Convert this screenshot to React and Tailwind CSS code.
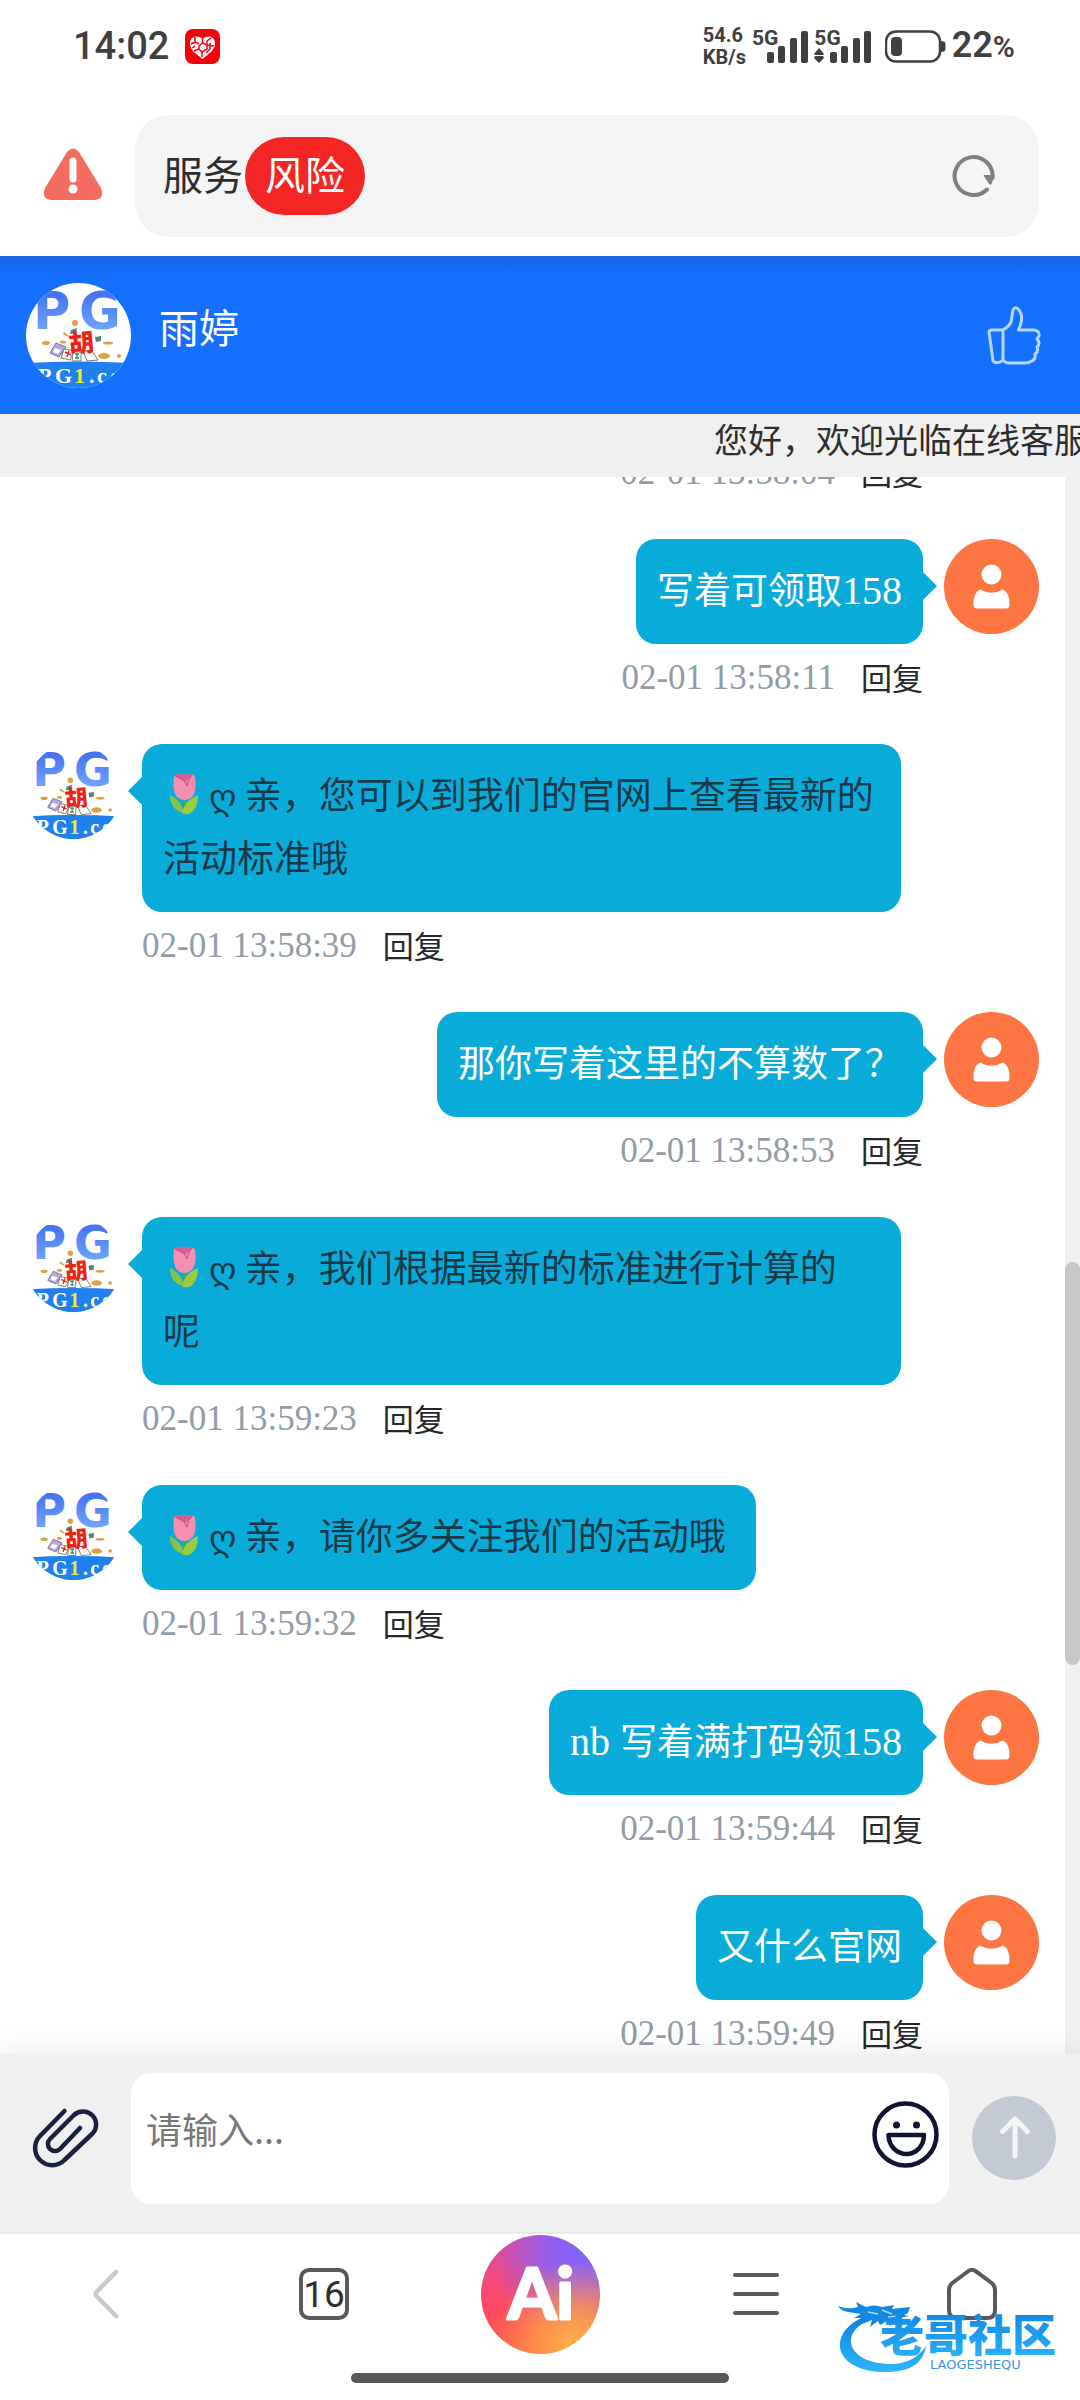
import { useId } from "react";

const CJK = "font-['Noto_Sans_CJK_SC',sans-serif]";

const messages = [
  { from: "me", text: "写着可领取", digits: "158", time: "02-01 13:58:11" },
  { from: "agent", lines: ["亲，您可以到我们的官网上查看最新的", "活动标准哦"], time: "02-01 13:58:39" },
  { from: "me", text: "那你写着这里的不算数了？", time: "02-01 13:58:53" },
  { from: "agent", lines: ["亲，我们根据最新的标准进行计算的", "呢"], time: "02-01 13:59:23" },
  { from: "agent", lines: ["亲，请你多关注我们的活动哦"], time: "02-01 13:59:32" },
  { from: "me", prefix: "nb ", text: "写着满打码领", digits: "158", time: "02-01 13:59:44" },
  { from: "me", text: "又什么官网", time: "02-01 13:59:49" },
];

function SignalBars({ arrows }) {
  return (
    <div className="flex h-9 items-end">
      <span className="-mr-3 self-start text-[21px] leading-5 font-bold">5G</span>
      <svg width="42" height="34" viewBox="0 0 42 34" fill="currentColor" aria-hidden="true">
        <rect x="1" y="22" width="7" height="11" rx="2" />
        <rect x="12" y="16" width="7" height="17" rx="2" />
        <rect x="24" y="8" width="7" height="25" rx="2" />
        <rect x="35" y="1" width="7" height="32" rx="2" />
      </svg>
      {arrows && (
        <svg className="order-first -mr-2.5" width="10" height="16" viewBox="0 0 10 16" fill="currentColor" aria-hidden="true">
          <path d="M5 0 10 6 9 7H1L0 6ZM5 15 10 10 9 8H1L0 10Z" />
        </svg>
      )}
    </div>
  );
}

function StatusBar() {
  return (
    <div className="flex h-[115px] items-start justify-between pt-6 pr-[65px] pl-[73px] font-[Roboto,sans-serif] text-[#404040]">
      <div className="flex h-11 items-center gap-4">
        <span className="text-[38px] leading-11 font-medium">14:02</span>
        <svg width="35" height="35" viewBox="0 0 35 35" aria-label="通知">
          <rect width="35" height="35" rx="8" fill="#f5000c" />
          <path d="M17.500 30C12 25 5 22 5 14C5 8 12 5 17.500 10C23 5 30 8 30 14C30 22 23 25 17.500 30Z" fill="#fff" />
          <path
            d="M10 8V13L6 15M10 13 14 15M17.500 10V14L14 17V20L9 22M17.500 14 22 16V12L26 9M22 16 29 17M14 20 17 23 22 20V17M17 23V28M10 17 7 19M25 14V20L21 24"
            stroke="#f5000c"
            strokeWidth="1.500"
            fill="none"
          />
        </svg>
      </div>
      <div className="flex h-11 items-center gap-1.5">
        <div className="text-[20px] leading-[22px] font-bold">
          <div>54.6</div>
          <div>KB/s</div>
        </div>
        <SignalBars />
        <SignalBars arrows />
        <svg className="ml-2" width="61" height="33" viewBox="0 0 61 33" fill="none" aria-label="电量">
          <rect x="1" y="1.500" width="54" height="30" rx="10" stroke="currentColor" strokeWidth="2.500" />
          <rect x="6" y="7" width="11" height="19" rx="4" fill="currentColor" />
          <path d="M56 11Q60.500 11 60.500 14V19Q60.500 22 56 22Z" fill="currentColor" />
        </svg>
        <span className="text-[36px] leading-11 font-semibold">
          22<span className="text-[30px]">%</span>
        </span>
      </div>
    </div>
  );
}

function AddressBar() {
  return (
    <div className="flex items-center pr-[41px] pb-[19px]">
      <div className="flex w-[135px] shrink-0 justify-center">
        <svg className="mb-1 ml-2.5" width="60" height="52" viewBox="0 0 60 52" aria-label="警告">
          <path d="M24 4Q30-3 36 4L58 40Q62 51 52 52H8Q-2 51 2 40Z" fill="#f56c61" />
          <path d="M30 13V31" stroke="#fff" strokeWidth="7" strokeLinecap="round" />
          <circle cx="30" cy="41" r="4.500" fill="#fff" />
        </svg>
      </div>
      <div className="flex h-[122px] flex-1 items-center rounded-[34px] bg-[#f4f4f4] pr-[43px] pl-7 text-[40px] text-[#2e2e2e]">
        <span className="pb-1.5">服务</span>
        <span className="ml-0.5 flex h-[78px] items-center rounded-full bg-[#f42525] px-5 pb-1.5 text-white">风险</span>
        <button className="mb-0.5 ml-auto" aria-label="刷新">
          <svg width="44" height="44" viewBox="0 0 44 44" fill="none">
            <path d="M35 36.500A19 19 0 1 1 40.500 25" stroke="#808080" strokeWidth="4" strokeLinecap="round" />
            <path d="M32 22.500H42L39 31Q38 32 37 30Z" fill="#808080" stroke="#808080" strokeLinejoin="round" />
          </svg>
        </button>
      </div>
    </div>
  );
}

function BrandAvatar({ size }) {
  const id = useId();
  return (
    <svg className="shrink-0" width={size} height={size} viewBox="0 0 105 105" aria-label="客服头像">
      <defs>
        <clipPath id={id + "c"}>
          <circle cx="52.500" cy="52.500" r="52.500" />
        </clipPath>
        <linearGradient id={id + "g"} x1="0" y1="0" x2="0" y2="1">
          <stop offset="0.200" stopColor="#4572f2" />
          <stop offset="0.900" stopColor="#73adfb" />
        </linearGradient>
      </defs>
      <g clipPath={`url(#${id}c)`}>
        <rect width="105" height="105" fill="#fff" />
        <text x="7" y="46" fontFamily="DejaVu Sans, sans-serif" fontWeight="700" fontSize="51" fill={`url(#${id}g)`}>
          P
        </text>
        <text x="53" y="46" fontFamily="DejaVu Sans, sans-serif" fontWeight="700" fontSize="51" fill={`url(#${id}g)`}>
          G
        </text>
        <g fill="#e0a046">
          <circle cx="49" cy="40" r="3" />
          <ellipse cx="20" cy="60" rx="4" ry="2" />
          <ellipse cx="37" cy="59" rx="3" ry="1.500" />
          <ellipse cx="82" cy="60" rx="5" ry="1.500" />
          <circle cx="93" cy="73" r="2" />
          <ellipse cx="78" cy="73" rx="6" ry="3" />
          <path d="M38 49 43 53 42 54 37 51Z" />
        </g>
        <path d="M45 47 51 45 50 50 44 51ZM69 54 75 53 75 58 70 59Z" fill="#5b8276" />
        <g stroke="#777" strokeWidth="1">
          <path d="M30 60 40 64 33 74 24 70Z" fill="#b9a2ee" />
          <path d="M38 66 48 68 44 77 35 75Z" fill="#fff" />
          <path d="M47 69H55V78H46Z" fill="#fff" />
          <path d="M57 68 66 68 72 77 61 78Z" fill="#fff" />
        </g>
        <path d="M29 65 35 67 32 71 27 69Z" fill="#fff" />
        <path d="M39 69 45 72M43 68 41 74" stroke="#e02626" strokeWidth="1.500" />
        <path d="M49 71H53M51 70V76M49 75H53" stroke="#2a9d4b" strokeWidth="1.500" />
        <text
          x="43"
          y="69"
          transform="rotate(-5 54 60)"
          fontFamily="Noto Sans CJK SC, sans-serif"
          fontWeight="900"
          fontSize="25"
          fill="#ee2214"
        >
          胡
        </text>
        <path d="M0 80Q52 77 105 80V105H0Z" fill="#1f80ee" />
        <g fontFamily="Liberation Serif, serif" fontWeight="700" fontSize="22" fill="#fff">
          <text x="12" y="100">P</text>
          <text x="29" y="100">G</text>
          <text x="48" y="100" fill="#e6ee3c">1</text>
          <text x="63" y="100">.</text>
          <text x="71" y="100">c</text>
          <text x="84" y="100">o</text>
        </g>
      </g>
    </svg>
  );
}

function UserAvatar() {
  return (
    <svg className="shrink-0" width="95" height="95" viewBox="0 0 95 95" aria-label="用户头像">
      <circle cx="47.500" cy="47.500" r="47.500" fill="#fd7542" />
      <circle cx="47.500" cy="35.500" r="10" fill="#fff" />
      <path d="M36 50.500Q47.500 57 59 50.500Q66 54 65.500 66Q65.500 69.500 62 69.500H33Q29.500 69.500 29.500 66Q29 54 36 50.500Z" fill="#fff" />
    </svg>
  );
}

function Tulip() {
  return (
    <svg className="mr-2.5 ml-1.5 inline-block align-[-6px]" width="30" height="42" viewBox="0 0 30 42" aria-label="郁金香">
      <path d="M14 26H17V38H14Z" fill="#689f38" />
      <path d="M15 40Q13 28 1 22Q1 37 15 40Z" fill="#8bc34a" />
      <path d="M13 40Q15 28 29 22Q29 37 20 41Q15 42 13 40Z" fill="#9ccc3c" />
      <path d="M5 3Q10-1 13 2Q16-1 19 2Q24-1 26 4Q29 26 16 27Q2 27 5 3Z" fill="#f48fb1" />
      <path d="M5 3Q10-1 13 2Q16-1 19 2Q22 0 24 2L16 9Z" fill="#d85f94" />
      <path d="M8 3Q15 5 18 13Q19 6 23 2" fill="none" stroke="#c84b84" strokeWidth="1" />
    </svg>
  );
}

function Meta({ time, mine }) {
  return (
    <div className={"flex h-[100px] items-start gap-[26px] pt-2.5 " + (mine ? "justify-end" : "")}>
      <time className="font-['Liberation_Serif',serif] text-[35px] leading-[48px] text-[#929ca8]">{time}</time>
      <button className="text-[31px] leading-[46px] text-[#26282b]">回复</button>
    </div>
  );
}

function MyMessage({ prefix, text, digits, time }) {
  return (
    <li className="flex justify-end gap-[21px]">
      <div>
        <div className="flex justify-end">
          <div className="relative rounded-[20px] bg-[#09acd9] px-[21px] pt-[18px] pb-6 text-[37px] leading-[63px] text-white">
            {prefix && <span className="font-['Liberation_Serif',serif] text-[40px] leading-none whitespace-pre">{prefix}</span>}
            {text}
            {digits && <span className="font-['Liberation_Serif',serif] text-[40px] leading-none">{digits}</span>}
            <svg className="absolute top-[33px] left-full" width="14" height="28" viewBox="0 0 14 28" fill="#09acd9" aria-hidden="true">
              <path d="M0 0 14 14 0 28Z" />
            </svg>
          </div>
        </div>
        <Meta time={time} mine />
      </div>
      <UserAvatar />
    </li>
  );
}

function AgentMessage({ lines, time }) {
  return (
    <li className="flex gap-[21px]">
      <BrandAvatar size={95} />
      <div>
        <div className="relative w-fit max-w-[759px] rounded-[20px] bg-[#09acd9] pt-[18px] pr-[30px] pb-6 pl-[21px] text-[37px] leading-[63px] text-[#173a49]">
          <svg className="absolute top-[33px] right-full" width="14" height="28" viewBox="0 0 14 28" fill="#09acd9" aria-hidden="true">
            <path d="M14 0 0 14 14 28Z" />
          </svg>
          <p className={lines.length > 1 ? "w-[708px] whitespace-nowrap" : "whitespace-nowrap"}>
            <Tulip />
            <span className="font-['DejaVu_Sans',sans-serif] text-[35px] leading-none">ღ</span>
            <span> {lines[0]}</span>
            {lines[1] && <br />}
            {lines[1]}
          </p>
        </div>
        <Meta time={time} />
      </div>
    </li>
  );
}

function ChatLog() {
  return (
    <main className="flex min-h-0 flex-1 overflow-hidden">
      <ul className="-mt-[38px] flex-1 px-[26px]">
        <li className="pr-[116px]">
          <Meta time="02-01 13:58:04" mine />
        </li>
        {messages.map((m) => (m.from === "me" ? <MyMessage key={m.time} {...m} /> : <AgentMessage key={m.time} {...m} />))}
      </ul>
      <div className="w-[15px] bg-[#f0f0f0] pt-[785px]">
        <div className="h-[403px] rounded-full bg-[#c6c6c6]" />
      </div>
    </main>
  );
}

function Composer() {
  return (
    <form
      className="relative flex h-[178px] shrink-0 items-center bg-[#f0f0f0] pr-6 pl-[31px] shadow-[0_0_30px_rgba(0,0,0,0.1)]"
      onSubmit={(e) => e.preventDefault()}
    >
      <button type="button" aria-label="附件" className="mr-7 mb-2.5 shrink-0">
        <svg width="72" height="64" viewBox="0 0 72 64" fill="none" stroke="#1b2141" strokeWidth="4.500" strokeLinecap="round" strokeLinejoin="round">
          <path d="M33.500 5 9 30A17 17 0 0 0 33.500 54L61 28A13 13 0 0 0 43 9L19 33A7 7 0 0 0 29 43L49 22" />
        </svg>
      </button>
      <div className="mt-[19px] flex h-[131px] flex-1 items-center self-start rounded-[20px] bg-white pr-2.5 pl-[15px]">
        <textarea
          aria-label="请输入"
          placeholder="请输入..."
          className="h-full min-w-0 flex-1 resize-none bg-transparent pt-7 text-[36px] leading-[54px] outline-none placeholder:text-[#777]"
        />
        <button type="button" aria-label="表情" className="mb-2">
          <svg width="67" height="67" viewBox="0 0 67 67" fill="none" stroke="#0f1433" strokeWidth="4.500" strokeLinejoin="round">
            <circle cx="33.500" cy="33.500" r="31" />
            <path d="M16.500 34H52C52 45 44 53 34.500 53S16.500 45 16.500 34Z" />
            <circle cx="24.500" cy="24" r="3.500" fill="#0f1433" stroke="none" />
            <circle cx="44.500" cy="24" r="3.500" fill="#0f1433" stroke="none" />
          </svg>
        </button>
      </div>
      <button type="submit" aria-label="发送" className="mb-2.5 ml-[23px] shrink-0">
        <svg width="84" height="84" viewBox="0 0 84 84" fill="none">
          <circle cx="42" cy="42" r="42" fill="#c4cad3" />
          <path d="M43 60V24M30.500 35.500 43 23 55.500 35.500" stroke="#f3f4f5" strokeWidth="5" strokeLinecap="round" strokeLinejoin="round" />
        </svg>
      </button>
    </form>
  );
}

function Watermark() {
  return (
    <div className="pointer-events-none absolute right-3 bottom-6 h-[78px] w-[230px]" aria-label="老哥社区">
      <svg width="230" height="78" viewBox="0 0 230 78">
        <defs>
          <linearGradient id="wave" x1="0" y1="0" x2="0" y2="1">
            <stop offset="0" stopColor="#0c7fe0" />
            <stop offset="1" stopColor="#2db6fb" />
          </linearGradient>
        </defs>
        <path
          d="M38 15C16 20 1 33 2 49C4 66 25 75 52 74C72 73 85 66 88 48C80 61 66 66 53 66C31 66 13 57 13 43C13 31 26 22 46 17Z"
          fill="url(#wave)"
        />
        <path
          d="M0 8Q10 12 20 9L18 4 28 9Q36 6 44 9L56 7 54 11 72 9 70 15 66 17 71 18 62 20 68 24 58 23 52 28 49 23 42 27 40 23 32 29 34 22 24 26 28 20 16 20 23 16 10 14Q3 13 0 8Z"
          fill="#1287e3"
        />
        <path d="M30 14 40 16M44 12 54 16M50 19 60 18" stroke="#a9d8fa" strokeWidth="1.500" />
        <text x="42" y="54" fontFamily="Noto Sans CJK SC, sans-serif" fontWeight="900" fontSize="44" fill="url(#wave)">
          老哥社区
        </text>
        <text x="92" y="71" fontFamily="DejaVu Sans, sans-serif" fontSize="13" fill="#3d94e6">
          LAOGESHEQU
        </text>
      </svg>
    </div>
  );
}

function BrowserNav() {
  return (
    <nav className="relative shrink-0 border-t-2 border-[#e8e8e8] bg-white">
      <div className="grid h-[120px] grid-cols-5 place-items-center">
        <button aria-label="后退" className="mr-1">
          <svg width="28" height="50" viewBox="0 0 28 50" fill="none" stroke="#c8c8c8" strokeWidth="4.500" strokeLinecap="round" strokeLinejoin="round">
            <path d="M24 3 4.500 23Q3 25 4.500 27L24 47" />
          </svg>
        </button>
        <button
          aria-label="标签页"
          className="flex h-[52px] w-[50px] items-center justify-center rounded-[10px] border-4 border-[#595959] font-[Roboto,sans-serif] text-[37px] leading-none text-[#2e2e2e]"
        >
          16
        </button>
        <button aria-label="Ai">
          <span className="flex size-[119px] items-center justify-center rounded-full bg-[radial-gradient(circle_at_78%_92%,#ffb048_0%,rgba(255,160,76,0.75)_25%,transparent_58%),radial-gradient(circle_at_82%_14%,#8462ff_0%,rgba(132,98,255,0.85)_22%,transparent_62%),linear-gradient(165deg,#e94a92_15%,#fd4a5e_55%,#ff5a48_85%)]">
            <svg width="80" height="70" viewBox="0 0 80 70">
              <text
                x="41"
                y="60"
                textAnchor="middle"
                fontFamily="Lato, sans-serif"
                fontWeight="700"
                fontSize="70"
                fill="#fff"
                stroke="#fff"
                strokeWidth="3"
                strokeLinejoin="round"
              >
                Ai
              </text>
            </svg>
          </span>
        </button>
        <button aria-label="菜单">
          <svg width="48" height="44" viewBox="0 0 48 44" stroke="#595959" strokeWidth="4" strokeLinecap="round">
            <path d="M3 3H45M3 22H45M3 41H45" />
          </svg>
        </button>
        <button aria-label="主页">
          <svg width="52" height="54" viewBox="0 0 52 54" fill="none" stroke="#595959" strokeWidth="4" strokeLinejoin="round">
            <path d="M22.500 4Q26 1.500 29.500 4L45 15.500Q49 18.500 49 23V43Q49 51 41 51H11Q3 51 3 43V23Q3 18.500 7 15.500Z" />
          </svg>
        </button>
      </div>
      <div className="flex h-[46px] justify-center pt-[19px]">
        <div className="h-2.5 w-[378px] rounded-full bg-[#595959]" />
      </div>
      <Watermark />
    </nav>
  );
}

export default function App() {
  return (
    <div className={"flex h-screen flex-col bg-white " + CJK}>
      <StatusBar />
      <AddressBar />
      <header className="flex h-[158px] shrink-0 items-center bg-[linear-gradient(#1768e6,#156fff_20px)] pr-9 pl-[26px]">
        <BrandAvatar size={105} />
        <h1 className="mb-[18px] ml-[28px] text-[40px] text-white">雨婷</h1>
        <button className="ml-auto" aria-label="点赞">
          <svg width="60" height="68" viewBox="0 0 60 68" fill="none" stroke="#b4d6ff" strokeWidth="3" strokeLinejoin="round">
            <path d="M19 29V59Q14 64 9 60Q7 45 5 31Q5 29 8 29H19Q27 24 27.500 19Q28 14 29 9Q31 5 34 8Q41 15 34.500 29H50Q56 30 55 35L53 38Q57 42 53 46Q55 50 51 53Q52 58 48 60Q45 62 41 62H25Q21 62 19 59" />
          </svg>
        </button>
      </header>
      <div className="flex h-[63px] shrink-0 items-start justify-end overflow-hidden bg-[#f0f0f0]">
        <p className="-mr-2 text-[34px] leading-[50px] whitespace-nowrap text-[#2e2e2e]">您好，欢迎光临在线客服</p>
      </div>
      <ChatLog />
      <Composer />
      <BrowserNav />
    </div>
  );
}
